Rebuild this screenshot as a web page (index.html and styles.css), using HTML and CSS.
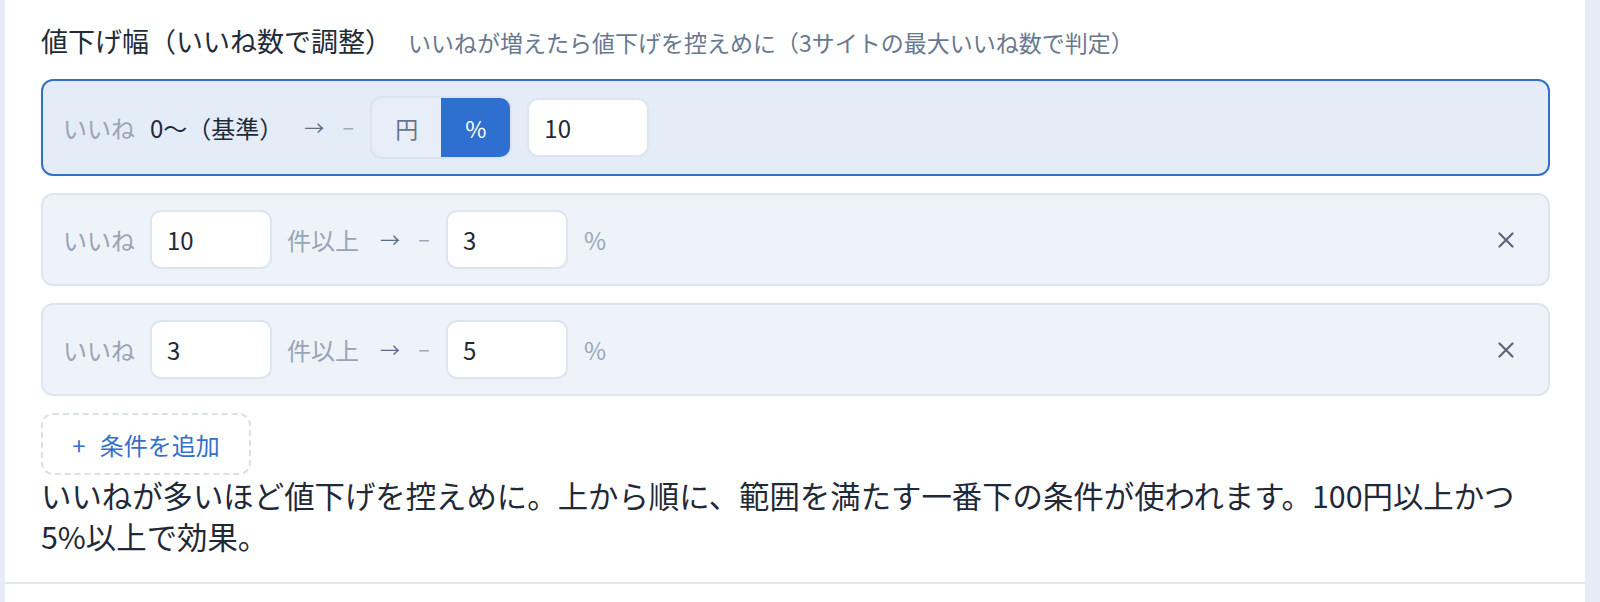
FILE: index.html
```html
<!DOCTYPE html>
<html lang="ja">
<head>
<meta charset="utf-8">
<title>値下げ幅</title>
<link rel="stylesheet" href="styles.css">
</head>
<body>
<div class="page">
  <section class="panel">
    <div class="field-head">
      <span class="field-title">値下げ幅（いいね数で調整）</span>
      <span class="field-hint">いいねが増えたら値下げを控えめに（3サイトの最大いいね数で判定）</span>
    </div>

    <div class="rules">
      <div class="rule rule-base">
        <span class="muted">いいね</span>
        <span class="base-label">0〜（基準）</span>
        <span class="arrow">→</span>
        <span class="minus">−</span>
        <div class="seg">
          <button class="seg-btn">円</button>
          <button class="seg-btn is-on">%</button>
        </div>
        <input class="num" type="text" value="10">
      </div>

      <div class="rule">
        <span class="muted">いいね</span>
        <input class="num" type="text" value="10">
        <span class="muted">件以上</span>
        <span class="arrow">→</span>
        <span class="minus">−</span>
        <input class="num" type="text" value="3">
        <span class="unit">%</span>
        <button class="remove" aria-label="削除">
          <svg width="16" height="16" viewBox="0 0 16 16"><path d="M1.5 1.5L14.5 14.5M14.5 1.5L1.5 14.5" stroke="currentColor" stroke-width="2.2" stroke-linecap="round"/></svg>
        </button>
      </div>

      <div class="rule">
        <span class="muted">いいね</span>
        <input class="num" type="text" value="3">
        <span class="muted">件以上</span>
        <span class="arrow">→</span>
        <span class="minus">−</span>
        <input class="num" type="text" value="5">
        <span class="unit">%</span>
        <button class="remove" aria-label="削除">
          <svg width="16" height="16" viewBox="0 0 16 16"><path d="M1.5 1.5L14.5 14.5M14.5 1.5L1.5 14.5" stroke="currentColor" stroke-width="2.2" stroke-linecap="round"/></svg>
        </button>
      </div>
    </div>

    <button class="add-rule"><span class="add-plus">+</span>条件を追加</button>
    <p class="note">いいねが多いほど値下げを控えめに。上から順に、範囲を満たす一番下の条件が使われます。100円以上かつ5%以上で効果。</p>
  </section>
</div>
</body>
</html>
```

FILE: styles.css
```css
html, body {
  margin: 0;
  padding: 0;
  background: #e6ecf6;
}

.page {
  margin: 0 15px 0 5px;
  background: #ffffff;
  min-height: 602px;
}

.panel {
  padding: 23px 35px 25px 36px;
  border-bottom: 2px solid #e1e8f2;
  font-family: "Noto Sans CJK JP", "Noto Sans", sans-serif;
}

.field-head {
  display: flex;
  align-items: baseline;
  gap: 16px;
  margin-bottom: 19px;
  line-height: 36px;
}

.field-title {
  font-size: 27px;
  color: #222b38;
}

.field-hint {
  font-size: 23px;
  color: #67788f;
}

.rules {
  display: flex;
  flex-direction: column;
  gap: 17px;
}

.rule {
  display: flex;
  align-items: center;
  gap: 15px;
  padding: 15px 20px;
  border: 2px solid #dde5f0;
  border-radius: 12px;
  background: #eef3fa;
  font-size: 24px;
}

.rule-base {
  border-color: #3570c8;
  background: #e4ecf7;
}

.muted {
  color: #98a4b5;
}

.base-label {
  color: #1f2937;
}

.arrow {
  width: 24px;
  margin-left: 4px;
  text-align: center;
  font-size: 20px;
  color: #5f6e85;
}

.minus {
  width: 14px;
  text-align: center;
  color: #9ea9ba;
  font-size: 20px;
}

.unit {
  color: #99a5b7;
  margin-left: 1px;
}

.seg {
  display: flex;
  height: 63px;
  box-sizing: border-box;
  border: 2px solid #dce4ef;
  border-radius: 12px;
  overflow: hidden;
  background: #e8eef8;
}

.seg-btn {
  width: 69px;
  border: 0;
  margin: 0;
  padding: 0;
  background: transparent;
  font-family: inherit;
  font-size: 23px;
  color: #67768d;
}

.seg-btn.is-on {
  background: #2f6fd0;
  color: #ffffff;
}

.num {
  width: 122px;
  height: 59px;
  box-sizing: border-box;
  border: 2px solid #dde5f0;
  border-radius: 11px;
  background: #ffffff;
  padding: 0 15px;
  font-family: "Noto Sans CJK JP", sans-serif;
  font-size: 24px;
  color: #1f2937;
}

.remove {
  margin-left: auto;
  margin-right: 14px;
  border: 0;
  background: transparent;
  color: #5d6679;
  padding: 0;
  display: flex;
}

.add-rule {
  margin-top: 17px;
  width: 210px;
  height: 62px;
  box-sizing: border-box;
  border: 2px dashed #d8e0ea;
  border-radius: 12px;
  background: #ffffff;
  color: #336fcb;
  font-family: inherit;
  font-size: 24px;
  display: flex;
  align-items: center;
  justify-content: center;
  padding: 0;
}

.add-plus {
  margin-right: 14px;
}

.note {
  margin: 0;
  padding-right: 20px;
  font-size: 30.4px;
  line-height: 41px;
  color: #1f2937;
}
```
